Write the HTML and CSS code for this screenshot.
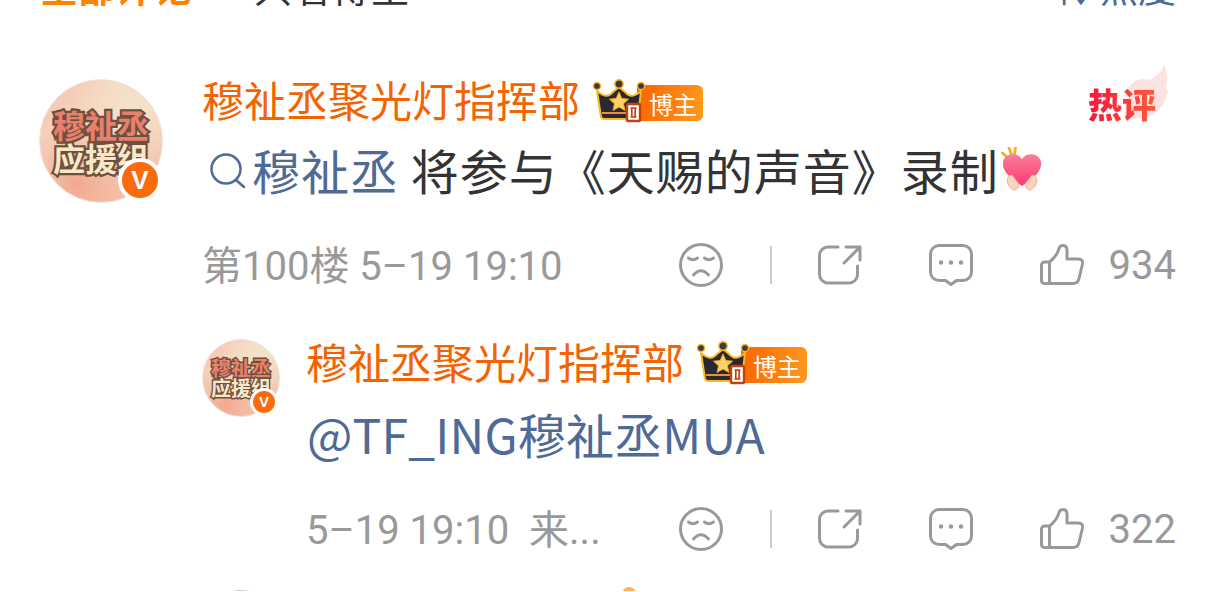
FILE: index.html
```html
<!DOCTYPE html>
<html lang="zh-CN">
<head>
    <meta charset="utf-8"/>
    <title>评论</title>
    <link rel="stylesheet" href="styles.css">
</head>
<body>
    <svg class="defs" width="0" height="0">
        <defs>
            <linearGradient id="heart-fill" x1="0" y1="0" x2="0" y2="1">
                <stop offset="0" stop-color="#fb7d98"/>
                <stop offset="1" stop-color="#f93a72"/>
            </linearGradient>
        </defs>
        <symbol id="crown" viewBox="0 0 56 44">
            <path d="M6 12 Q16 21 22 13 L28 8 L34 13 Q40 21 50 12 L47 38 Q46 40 44 40 H13 Q11 40 10 38 Z" fill="#2a2933" stroke="#fbb81f" stroke-width="2" stroke-linejoin="round"/>
            <rect x="11" y="33" width="34" height="2" fill="#e8913a"/>
            <circle cx="6" cy="7" r="3.600" fill="#3a3a44" stroke="#fbb81f" stroke-width="1.500"/>
            <circle cx="28" cy="5" r="4.200" fill="#3a3a44" stroke="#fbb81f" stroke-width="1.500"/>
            <circle cx="50" cy="7" r="3.600" fill="#3a3a44" stroke="#fbb81f" stroke-width="1.500"/>
            <path d="M28 13 L30.800 19.500 L37.500 20.200 L32.500 24.800 L34 31.500 L28 28 L22 31.500 L23.500 24.800 L18.500 20.200 L25.200 19.500 Z" fill="#fbd268" stroke="#f3a51f" stroke-width="1"/>
            <rect x="36" y="25" width="13" height="17" rx="1" fill="#fff" stroke="#c2410c" stroke-width="2.400"/>
            <path d="M39.500 29 H45.500 M39.500 38 H45.500 M40.800 29 V38 M44.200 29 V38" stroke="#c2410c" stroke-width="1.700" fill="none"/>
        </symbol>
        <symbol id="face" viewBox="0 0 46 46">
            <circle cx="23" cy="23" r="20.500" fill="none" stroke="currentColor" stroke-width="3"/>
            <path d="M10.500 16 q4 3.500 9 0 M26.500 16 q4 3.500 9 0 M15.500 33 q7.500 -8.500 15 0" fill="none" stroke="currentColor" stroke-width="3" stroke-linecap="round"/>
        </symbol>
        <symbol id="share" viewBox="0 0 44 40">
            <path d="M20 2 H10 a8.500 8.500 0 0 0 -8.500 8.500 V29.500 a8.500 8.500 0 0 0 8.500 8.500 H31 a8.500 8.500 0 0 0 8.500 -8.500 V21" fill="none" stroke="currentColor" stroke-width="3" stroke-linecap="round"/>
            <path d="M26 18 L41 3 M28 2 H42 V15" fill="none" stroke="currentColor" stroke-width="3" stroke-linecap="round"/>
        </symbol>
        <symbol id="chat" viewBox="0 0 44 42">
            <path d="M10 1.500 H34 a8.500 8.500 0 0 1 8.500 8.500 V28 a8.500 8.500 0 0 1 -8.500 8.500 H27.500 L22 40.500 L16.500 36.500 H10 a8.500 8.500 0 0 1 -8.500 -8.500 V10 a8.500 8.500 0 0 1 8.500 -8.500 Z" fill="none" stroke="currentColor" stroke-width="3" stroke-linejoin="round"/>
            <circle cx="12" cy="18.500" r="2.200" fill="currentColor"/>
            <circle cx="22" cy="18.500" r="2.200" fill="currentColor"/>
            <circle cx="32" cy="18.500" r="2.200" fill="currentColor"/>
        </symbol>
        <symbol id="thumb" viewBox="0 0 44 42">
            <path d="M9.500 39.500 V18 H4.500 a3 3 0 0 0 -3 3 V36.500 a3 3 0 0 0 3 3 H33 q5 0 6 -5 L42.500 20 q0.800 -5 -4.500 -5 H27 V6 q0 -4.500 -4 -4.500 q-3 0 -4 3 q-1.500 7 -9.500 13.500" fill="none" stroke="currentColor" stroke-width="3" stroke-linejoin="round" stroke-linecap="round"/>
        </symbol>
    </svg>

    <div class="tabs">
        <span class="tab-on">全部评论</span>
        <span class="tab-off">只看博主</span>
        <span class="tab-sort">⇅ 热度</span>
    </div>

    <div class="comment">
        <div class="avatar">
            <span class="avatar-top">穆祉丞</span>
            <span class="avatar-bottom">应援组</span>
            <span class="vip">V</span>
        </div>
        <div class="comment-body">
            <div class="name-row">
                <span class="name">穆祉丞聚光灯指挥部</span>
                <span class="badge">
                    <svg class="crown"><use href="#crown"/></svg>
                    <span class="badge-tag">博主</span>
                </span>
            </div>
            <div class="content">
                <svg class="search" viewBox="0 0 36 36"><circle cx="16" cy="16" r="14.500" fill="none" stroke="#4f6a96" stroke-width="2.500"/><path d="M26 27 L34 34" stroke="#4f6a96" stroke-width="2.500" stroke-linecap="round"/></svg><span class="link">穆祉丞</span><span class="text-main"> 将参与《天赐的声音》录制</span><svg class="heart" viewBox="0 0 42 44">
                    <path d="M1.500 6 L6 10 M8 1 L10.500 7.500 M14.500 0.500 L13.500 7" stroke="#f5b21c" stroke-width="2.800" stroke-linecap="round"/>
                    <path d="M21 39 C9 31 1 24 2 15.500 C3 7 15 4 21 12 C27 4 39 7 40 15.500 C41 24 33 31 21 39 Z" fill="url(#heart-fill)"/>
                    <path d="M6 33 q1 -5 5 -5 l7 9 q0 5 -5 6 q-6 -2 -7 -10 Z M36 33 q-1 -5 -5 -5 l-7 9 q0 5 5 6 q6 -2 7 -10 Z" fill="#fcd3bd" stroke="#eaa48c" stroke-width="0.800"/>
                </svg>
            </div>
            <div class="meta-row">
                <span class="meta">第100楼 5–19 19:10</span>
                <div class="actions">
                    <svg class="icon-face"><use href="#face"/></svg>
                    <span class="divider"></span>
                    <svg class="icon-share"><use href="#share"/></svg>
                    <svg class="icon-chat"><use href="#chat"/></svg>
                    <svg class="icon-thumb"><use href="#thumb"/></svg>
                    <span class="count">934</span>
                </div>
            </div>
        </div>
        <div class="hot">
            <svg class="flame" viewBox="0 0 44 56"><path d="M40 0 C43 10 44 16 42 24 C43 25 44 26 44 27 C42 36 38 44 32 48 C26 54 14 56 0 54 C2 44 2 30 6 22 C12 14 20 14 26 16 C32 12 38 8 40 0 Z" fill="#fde3e0"/></svg>
            <span class="hot-text">热评</span>
        </div>
    </div>

    <div class="reply">
        <div class="avatar avatar-small">
            <span class="avatar-top">穆祉丞</span>
            <span class="avatar-bottom">应援组</span>
            <span class="vip">V</span>
        </div>
        <div class="comment-body">
            <div class="name-row">
                <span class="name">穆祉丞聚光灯指挥部</span>
                <span class="badge">
                    <svg class="crown"><use href="#crown"/></svg>
                    <span class="badge-tag">博主</span>
                </span>
            </div>
            <div class="content content-reply">
                <span class="link">@TF_ING穆祉丞MUA</span>
            </div>
            <div class="meta-row meta-row-reply">
                <span class="meta">5–19 19:10&nbsp; 来...</span>
                <div class="actions">
                    <svg class="icon-face"><use href="#face"/></svg>
                    <span class="divider"></span>
                    <svg class="icon-share"><use href="#share"/></svg>
                    <svg class="icon-chat"><use href="#chat"/></svg>
                    <svg class="icon-thumb"><use href="#thumb"/></svg>
                    <span class="count">322</span>
                </div>
            </div>
        </div>
    </div>

    <div class="reply-next">
        <div class="avatar-next"></div>
        <span class="medal-next"></span>
    </div>
</body>
</html>
```

FILE: styles.css
```css
* {
    box-sizing: border-box;
}

html, body {
    height: 592px;
    overflow: hidden;
}

body {
    margin: 0;
    background-color: #ffffff;
    font-family: "Noto Sans CJK SC", "Noto Sans", sans-serif;
    color: #333;
}

.defs {
    position: absolute;
}

/* tabs, mostly scrolled off the top */
.tabs {
    display: flex;
    align-items: center;
    height: 52px;
    margin-top: -40px;
    padding: 0 39px 0 40px;
    font-size: 38px;
    line-height: 52px;
}

.tab-on {
    color: #ff8200;
    font-weight: 700;
}

.tab-off {
    margin-left: 62px;
    letter-spacing: 1px;
}

.tab-sort {
    margin-left: auto;
    color: #4f6a96;
}

.comment {
    position: relative;
    display: flex;
    gap: 40px;
    padding: 67px 39px 0 39px;
}

.comment .comment-body {
    margin-top: -3px;
}

.reply {
    display: flex;
    gap: 27px;
    padding: 52px 39px 0 202px;
}

.reply .comment-body {
    margin-top: -1px;
}

.avatar {
    position: relative;
    flex: none;
    display: flex;
    flex-direction: column;
    align-items: center;
    justify-content: center;
    width: 124px;
    height: 124px;
    border-radius: 50%;
    border: 1px solid #ece4df;
    background:
        radial-gradient(circle at 30% 85%, #f2a78d 0%, rgba(242, 167, 141, 0) 45%),
        radial-gradient(circle at 75% 20%, #f3e3c8 0%, rgba(243, 227, 200, 0) 45%),
        linear-gradient(135deg, #f6c3b0 0%, #f6dcc6 50%, #f3b9a0 100%);
    font-size: 32px;
    line-height: 1.02;
    font-weight: 700;
}

.avatar-small {
    width: 78px;
    height: 78px;
    font-size: 20px;
}

.avatar-top {
    color: #e9806b;
    -webkit-text-stroke: 0.14em #6e5040;
    paint-order: stroke fill;
}

.avatar-bottom {
    color: #f8e7c6;
    -webkit-text-stroke: 0.14em #6e5040;
    paint-order: stroke fill;
}

.vip {
    position: absolute;
    right: 0;
    bottom: 0;
    display: flex;
    align-items: center;
    justify-content: center;
    width: 44px;
    height: 44px;
    border: 4px solid #ffffff;
    border-radius: 50%;
    background-color: #f96b0d;
    color: #fff;
    font-family: "Liberation Sans", sans-serif;
    font-size: 26px;
    font-weight: 700;
}

.avatar-small .vip {
    width: 28px;
    height: 28px;
    border-width: 3px;
    font-size: 15px;
    right: 1px;
    bottom: 0;
}

.comment-body {
    flex: 1;
    min-width: 0;
}

.name-row {
    display: flex;
    align-items: center;
    height: 46px;
}

.name {
    margin-left: -1px;
    color: #f56200;
    font-size: 42px;
    line-height: 46px;
    white-space: nowrap;
}

.badge {
    display: flex;
    align-items: center;
    margin-left: 11px;
    padding-top: 8px;
}

.crown {
    position: relative;
    z-index: 1;
    width: 56px;
    height: 44px;
    margin-top: -4px;
}

.badge-tag {
    display: flex;
    align-items: center;
    justify-content: center;
    width: 66px;
    height: 36px;
    margin-left: -10px;
    padding-left: 6px;
    border-radius: 0 6px 6px 0;
    background: linear-gradient(100deg, #fb6400 0%, #ff9a1e 100%);
    color: #fff;
    font-size: 24px;
}

.content {
    display: flex;
    align-items: center;
    height: 64px;
    margin-top: 15px;
    font-size: 48px;
    letter-spacing: 1px;
    white-space: pre;
}

.content-reply {
    margin-top: 17px;
    letter-spacing: 0.2px;
}

.search {
    flex: none;
    width: 36px;
    height: 36px;
    margin: 4px 6px 0 7px;
}

.link {
    color: #4f6a96;
}

.text-main {
    color: #333;
}

.heart {
    flex: none;
    width: 42px;
    height: 44px;
    margin-left: 2px;
}

.meta-row {
    display: flex;
    align-items: center;
    justify-content: space-between;
    height: 48px;
    margin-top: 38px;
    color: #999;
}

.meta-row-reply {
    margin-top: 38px;
}

.meta {
    margin-left: -1px;
    font-family: Roboto, "Noto Sans CJK SC", sans-serif;
    font-size: 40px;
    white-space: nowrap;
}

.actions {
    display: flex;
    align-items: center;
    padding-top: 4px;
    color: #999;
}

.icon-face {
    width: 46px;
    height: 46px;
}

.divider {
    width: 2px;
    height: 38px;
    margin-left: 46px;
    background-color: #ccc;
}

.icon-share {
    width: 44px;
    height: 40px;
    margin-left: 46px;
}

.icon-chat {
    width: 44px;
    height: 42px;
    margin-left: 67px;
}

.icon-thumb {
    width: 44px;
    height: 42px;
    margin-left: 67px;
}

.count {
    width: 68px;
    margin-left: 24px;
    font-family: Roboto, "Noto Sans CJK SC", sans-serif;
    font-size: 40px;
    text-align: right;
}

.hot {
    position: absolute;
    top: 52px;
    right: 47px;
    width: 80px;
    height: 56px;
}

.flame {
    position: absolute;
    right: 0;
    top: 0;
    width: 44px;
    height: 56px;
}

.hot-text {
    position: absolute;
    left: 0;
    bottom: -4px;
    font-size: 34px;
    font-weight: 900;
    line-height: 40px;
    background: linear-gradient(90deg, #f5173c 0%, #ff5a3c 100%);
    -webkit-background-clip: text;
    background-clip: text;
    color: transparent;
}

/* next reply, only its top edge is on screen */
.reply-next {
    display: flex;
    align-items: flex-start;
    height: 4px;
    margin-top: 36px;
    padding-left: 202px;
    overflow: hidden;
}

.avatar-next {
    flex: none;
    width: 78px;
    height: 78px;
    margin-top: 3px;
    border-radius: 50%;
    background-color: #cfcabf;
}

.medal-next {
    flex: none;
    width: 14px;
    height: 14px;
    margin-left: 342px;
    border-radius: 50%;
    background-color: #fbb45a;
}
```
